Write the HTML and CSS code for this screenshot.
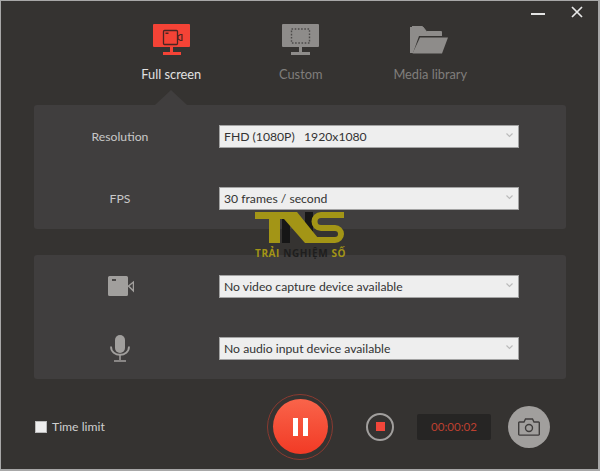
FILE: index.html
```html
<!DOCTYPE html>
<html lang="en">
<head>
<meta charset="utf-8">
<title>Screen recorder</title>
<link rel="stylesheet" href="styles.css">
</head>
<body>
<div class="window">
  <div class="titlebar">
    <span class="minimize"></span>
    <svg class="close" width="12" height="12" viewBox="0 0 12 12"><path d="M1 1l10 10M11 1L1 11" stroke="#e8e8e8" stroke-width="1.7" fill="none"/></svg>
  </div>
  <nav class="tabs">
    <div class="tab tab-active">
      <svg class="tab-icon icon-right" width="38" height="32" viewBox="0 0 38 32">
        <rect x="0" y="0" width="37" height="23" rx="1" fill="#f44336"/>
        <path d="M17 23h3v5h-3zM10 28h18v3H10z" fill="#f44336"/>
        <rect x="10.500" y="6.500" width="14" height="14" rx="1" fill="none" stroke="#4a2522" stroke-width="1.300"/>
        <path d="M25 12l2.500-1.500h1.500v6h-1.500L25 15z" fill="none" stroke="#4a2522" stroke-width="1.200"/>
        <rect x="12.500" y="8.500" width="3" height="1.500" fill="#4a2522"/>
      </svg>
      <span class="tab-label">Full screen</span>
    </div>
    <div class="tab">
      <svg class="tab-icon" width="38" height="32" viewBox="0 0 38 32">
        <rect x="0" y="0" width="37" height="23" rx="1" fill="#8e8c8a"/>
        <path d="M17 23h3v5h-3zM9 28h19v3H9z" fill="#8e8c8a"/>
        <rect x="9.500" y="5" width="18" height="14" fill="none" stroke="#4c4a49" stroke-width="1.400" stroke-dasharray="1.600 1.600"/>
      </svg>
      <span class="tab-label">Custom</span>
    </div>
    <div class="tab">
      <svg class="tab-icon icon-left" width="38" height="32" viewBox="0 0 38 32">
        <path d="M0 3h13l4 5h15v4H9L3 29H0z" fill="#8e8c8a"/>
        <path d="M2 2.500h10.500l4 5h15v2" fill="none" stroke="#8e8c8a"/>
        <path d="M10 13.500h28l-6 16H2.500z" fill="#8e8c8a"/>
      </svg>
      <span class="tab-label">Media library</span>
    </div>
  </nav>
  <section class="panel panel-first">
    <div class="row">
      <span class="row-head">Resolution</span>
      <div class="select"><span>FHD (1080P)&nbsp;&nbsp; 1920x1080</span><svg class="chev" width="7" height="5" viewBox="0 0 7 5"><path d="M.5 .5l3 3 3-3" fill="none" stroke="#bbb" stroke-width="1.200"/></svg></div>
    </div>
    <div class="row">
      <span class="row-head">FPS</span>
      <div class="select"><span>30 frames / second</span><svg class="chev" width="7" height="5" viewBox="0 0 7 5"><path d="M.5 .5l3 3 3-3" fill="none" stroke="#bbb" stroke-width="1.200"/></svg></div>
    </div>
  </section>
  <section class="panel panel-second">
    <div class="row">
      <span class="row-head head-icon">
        <svg width="26" height="20" viewBox="0 0 26 20"><path d="M1.500 0h17A1.500 1.500 0 0 1 20 1.500v17a1.500 1.500 0 0 1-1.500 1.500h-17A1.500 1.500 0 0 1 0 18.500v-17A1.500 1.500 0 0 1 1.500 0z" fill="#a19f9d"/><rect x="4" y="3" width="4" height="2" fill="#4a4847"/><path d="M20.500 10l5-4v9z" fill="none" stroke="#a19f9d" stroke-width="1.500"/></svg>
      </span>
      <div class="select"><span>No video capture device available</span><svg class="chev" width="7" height="5" viewBox="0 0 7 5"><path d="M.5 .5l3 3 3-3" fill="none" stroke="#bbb" stroke-width="1.200"/></svg></div>
    </div>
    <div class="row">
      <span class="row-head">
        <svg width="20" height="27" viewBox="0 0 20 27"><rect x="5" y="0" width="10" height="18" rx="5" fill="#a19f9d"/><path d="M1 11.500c0 11 18 11 18 0" fill="none" stroke="#a19f9d" stroke-width="1.800"/><path d="M10 20v5M4 26h12" stroke="#a19f9d" stroke-width="1.500" fill="none"/></svg>
      </span>
      <div class="select"><span>No audio input device available</span><svg class="chev" width="7" height="5" viewBox="0 0 7 5"><path d="M.5 .5l3 3 3-3" fill="none" stroke="#bbb" stroke-width="1.200"/></svg></div>
    </div>
  </section>
  <footer class="controls">
    <label class="limit"><span class="check"></span>Time limit</label>
    <div class="record">
      <div class="record-core"><span class="bar"></span><span class="bar"></span></div>
    </div>
    <div class="stop"><span class="stop-square"></span></div>
    <div class="timer">00:00:02</div>
    <div class="shot">
      <svg width="22" height="18" viewBox="0 0 22 18"><path d="M1.500 4H6l1.500-3h7L16 4h4.500a.8.8 0 0 1 .8.800v11.500a.8.8 0 0 1-.8.800h-19a.8.8 0 0 1-.8-.800V4.800a.8.8 0 0 1 .8-.800z" fill="none" stroke="#3f3d3c" stroke-width="1.400"/><circle cx="11" cy="10" r="3.500" fill="none" stroke="#3f3d3c" stroke-width="1.400"/></svg>
    </div>
  </footer>
  <div class="watermark">
    <svg width="91" height="32" viewBox="0 0 91 32">
      <path d="M27 7h8v24h-8zM50 0h8v24h-8z" fill="#161616"/>
      <path d="M0 0h42l21 26v5H50L29 7H25v24H14V7H0z" fill="#a39516"/>
      <path d="M89 3H66a6.500 6.500 0 0 0 0 13h14a6 6 0 0 1 0 12H56" fill="none" stroke="#a39516" stroke-width="6"/>
    </svg>
    <div class="watermark-text"><span class="wm-gold">TRẢI</span> <span class="wm-dark">NGHIỆM</span> <span class="wm-gold">SỐ</span></div>
  </div>
</div>
</body>
</html>
```
FILE: styles.css
```css
* { box-sizing: border-box; }
html, body { margin: 0; padding: 0; }
body { width: 600px; height: 471px; overflow: hidden; font-family: "Lato", "Open Sans", sans-serif; }

.window {
  position: relative;
  width: 600px;
  height: 471px;
  background: #353331;
  border-style: solid;
  border-color: #a8a8a8;
  border-width: 1px 2px 2px 1px;
  color: #ddd;
}

.titlebar { height: 23px; display: flex; align-items: center; justify-content: flex-end; padding: 3px 15px 0 0; gap: 26px; }
.minimize { width: 14px; height: 2px; background: #e4e4e4; }
.close { display: block; margin-top: -4px; }

.tabs { display: flex; padding-left: 105.500px; height: 81px; }
.tab { width: 129.500px; display: flex; flex-direction: column; align-items: center; position: relative; }
.tab-icon { display: block; }
.icon-right { margin-left: 1px; }
.icon-left { margin-left: -2px; }
.tab-label { margin-top: 10px; font-size: 12.800px; line-height: 17px; color: #807e7c; }
.tab-active .tab-label { color: #e2e2e2; }
.tab-active::after {
  content: "";
  position: absolute;
  left: 50%;
  bottom: 0;
  margin-left: -16px;
  border-left: 16px solid transparent;
  border-right: 16px solid transparent;
  border-bottom: 15px solid #403e3e;
}

.panel {
  margin: 0 32px 0 33px;
  height: 124px;
  background: #403e3e;
  border-radius: 3px;
  padding: 20px 47px 0 0;
  display: flex;
  flex-direction: column;
  gap: 40px;
}
.panel-second { margin-top: 26px; }

.row { display: flex; align-items: center; height: 22px; }
.row-head { width: 172px; margin-right: 13px; display: flex; justify-content: center; font-size: 12.200px; color: #c8c8c8; }
.head-icon { padding-left: 2px; }
.select {
  flex: 1;
  height: 23px;
  background: #eeeeee;
  border: 1px solid #a3a3a3;
  display: flex;
  align-items: center;
  justify-content: space-between;
  padding: 1px 5px 0 4px;
  font-size: 12.200px;
  color: #333;
}
.chev { display: block; margin-top: -2px; }

.controls { display: flex; align-items: center; height: 90px; padding: 5px 0 0 34px; }
.limit { width: 232px; display: flex; align-items: center; gap: 5px; font-size: 12.200px; color: #cfcfcf; }
.check { width: 12px; height: 12px; background: #eee; border: 1px solid #bbb; }

.record {
  width: 66px;
  height: 66px;
  border-radius: 50%;
  border: 1.500px solid #8a3a30;
  display: flex;
  align-items: center;
  justify-content: center;
}
.record-core {
  width: 55px;
  height: 55px;
  border-radius: 50%;
  background: linear-gradient(#f9644a, #f23a25);
  display: flex;
  align-items: center;
  justify-content: center;
  gap: 5px;
}
.bar { width: 5px; height: 18px; background: #fff; }

.stop {
  margin-left: 33px;
  width: 28px;
  height: 28px;
  border-radius: 50%;
  border: 2px solid #a19f9d;
  display: flex;
  align-items: center;
  justify-content: center;
}
.stop-square { width: 9px; height: 9px; background: #f2463a; }

.timer {
  margin-left: 23px;
  width: 74px;
  height: 26px;
  border-radius: 2px;
  background: #262524;
  color: #bd4030;
  font-size: 11.500px;
  line-height: 26px;
  text-align: center;
}

.shot {
  margin-left: 17px;
  width: 42px;
  height: 42px;
  border-radius: 50%;
  background: #a19f9d;
  display: flex;
  align-items: center;
  justify-content: center;
}

.watermark {
  position: absolute;
  left: 254px;
  top: 211px;
  width: 92px;
  display: flex;
  flex-direction: column;
}
.watermark svg { display: block; }
.watermark-text {
  font-family: "Open Sans", sans-serif;
  font-weight: 700;
  font-size: 10px;
  line-height: 12px;
  letter-spacing: 0.600px;
  white-space: nowrap;
  margin-top: 3px;
}
.wm-gold { color: #a39516; }
.wm-dark { color: #1e1e1e; }
```
